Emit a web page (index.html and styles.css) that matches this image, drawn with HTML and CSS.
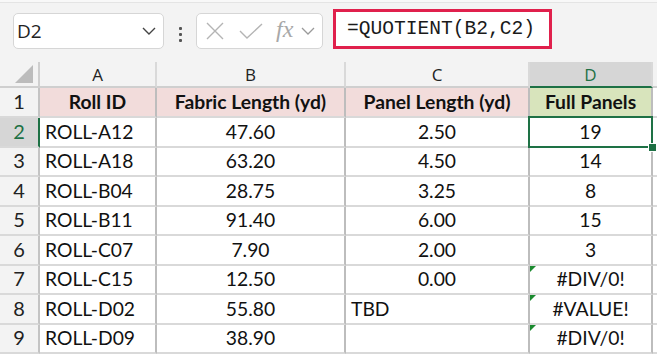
FILE: index.html
```html
<html>
<head>
    <link rel="stylesheet" href="styles.css">
</head>
<body>
<div class="ribbon-edge"></div>
<div class="toolbar">
    <div class="namebox">
        <span>D2</span>
        <svg class="chev" width="14" height="8" viewBox="0 0 14 8"><path d="M1 1 L7 7 L13 1" fill="none" stroke="#444" stroke-width="1.4"/></svg>
    </div>
    <div class="grip"><i></i><i></i><i></i></div>
    <div class="fxbox">
        <svg width="18" height="18" viewBox="0 0 18 18"><path d="M1 1 L17 17 M17 1 L1 17" stroke="#b4b4b4" stroke-width="1.4"/></svg>
        <svg width="24" height="16" viewBox="0 0 24 16"><path d="M1 8 L8 15 L23 1" fill="none" stroke="#b4b4b4" stroke-width="1.4"/></svg>
        <span class="fx">fx</span>
        <svg width="14" height="8" viewBox="0 0 14 8"><path d="M1 1 L7 7 L13 1" fill="none" stroke="#9a9a9a" stroke-width="1.3"/></svg>
    </div>
    <div class="formula">=QUOTIENT(B2,C2)</div>
</div>

<div class="sheet">
    <div class="corner"><span class="tri"></span></div>
    <div class="colhead">A</div>
    <div class="colhead">B</div>
    <div class="colhead">C</div>
    <div class="colhead active">D</div>
    <div class="colhead filler"></div>

    <div class="rowhead">1</div>
    <div class="cell hdr pink">Roll ID</div>
    <div class="cell hdr pink">Fabric Length (yd)</div>
    <div class="cell hdr pink">Panel Length (yd)</div>
    <div class="cell hdr green">Full Panels</div>
    <div class="cell filler"></div>

    <div class="rowhead active">2</div>
    <div class="cell left">ROLL-A12</div>
    <div class="cell">47.60</div>
    <div class="cell">2.50</div>
    <div class="cell selected">19<span class="handle"></span></div>
    <div class="cell filler"></div>

    <div class="rowhead">3</div>
    <div class="cell left">ROLL-A18</div>
    <div class="cell">63.20</div>
    <div class="cell">4.50</div>
    <div class="cell">14</div>
    <div class="cell filler"></div>

    <div class="rowhead">4</div>
    <div class="cell left">ROLL-B04</div>
    <div class="cell">28.75</div>
    <div class="cell">3.25</div>
    <div class="cell">8</div>
    <div class="cell filler"></div>

    <div class="rowhead">5</div>
    <div class="cell left">ROLL-B11</div>
    <div class="cell">91.40</div>
    <div class="cell">6.00</div>
    <div class="cell">15</div>
    <div class="cell filler"></div>

    <div class="rowhead">6</div>
    <div class="cell left">ROLL-C07</div>
    <div class="cell">7.90</div>
    <div class="cell">2.00</div>
    <div class="cell">3</div>
    <div class="cell filler"></div>

    <div class="rowhead">7</div>
    <div class="cell left">ROLL-C15</div>
    <div class="cell">12.50</div>
    <div class="cell">0.00</div>
    <div class="cell err">#DIV/0!</div>
    <div class="cell filler"></div>

    <div class="rowhead">8</div>
    <div class="cell left">ROLL-D02</div>
    <div class="cell">55.80</div>
    <div class="cell left">TBD</div>
    <div class="cell err">#VALUE!</div>
    <div class="cell filler"></div>

    <div class="rowhead">9</div>
    <div class="cell left">ROLL-D09</div>
    <div class="cell">38.90</div>
    <div class="cell"></div>
    <div class="cell err">#DIV/0!</div>
    <div class="cell filler"></div>
</div>
</body>
</html>
```

FILE: styles.css
```css
html, body {
    margin: 0;
    height: 100%;
    overflow: hidden;
    background: #f3f3f3;
    font-family: "Open Sans", sans-serif;
}

.ribbon-edge {
    height: 2px;
    background: #f8f8f8;
    border-bottom: 1px solid #e4e4e4;
}

.toolbar {
    height: 59px;
    display: flex;
    align-items: flex-start;
    padding-left: 13px;
    box-sizing: border-box;
}

.namebox {
    margin-top: 10px;
    width: 151px;
    height: 36px;
    box-sizing: border-box;
    background: #fff;
    border: 1px solid #d6d6d6;
    border-radius: 5px;
    display: flex;
    align-items: center;
    justify-content: space-between;
    padding: 0 7px 0 3px;
    font-size: 19px;
    color: #222;
}

.grip {
    width: 32px;
    margin-top: 24px;
    display: flex;
    flex-direction: column;
    align-items: center;
    gap: 3px;
}

.grip i {
    width: 3px;
    height: 3px;
    background: #555;
    border-radius: 1px;
}

.fxbox {
    margin-top: 10px;
    width: 127px;
    height: 36px;
    box-sizing: border-box;
    background: #fff;
    border: 1px solid #d6d6d6;
    border-radius: 5px;
    display: flex;
    align-items: center;
    padding-left: 9px;
}

.fxbox svg:nth-child(1) { margin-right: 15px; }
.fxbox svg:nth-child(2) { margin-right: 13px; }

.fx {
    font-family: "Liberation Serif", serif;
    font-style: italic;
    font-size: 24px;
    color: #a8a8a8;
    margin-right: 8px;
    margin-top: -3px;
}

.formula {
    margin-top: 6px;
    margin-left: 10px;
    width: 219px;
    height: 40px;
    box-sizing: border-box;
    background: #fff;
    border: 3px solid #e0204c;
    font-family: "Liberation Mono", monospace;
    font-size: 19.6px;
    color: #1a1a1a;
    padding-left: 11px;
    line-height: 34px;
}

.sheet {
    display: grid;
    grid-template-columns: 40px 117px 189px 184px 123px 1fr;
    grid-template-rows: 26px 30px repeat(8, 29.5px) 10px;
    background: #fff;
    font-family: "Lato", sans-serif;
    font-size: 19.3px;
    color: #111;
}

.corner {
    background: #f3f3f3;
    border-right: 2px solid #cfcfcf;
    border-bottom: 2px solid #cfcfcf;
    position: relative;
}

.tri {
    position: absolute;
    right: 5px;
    bottom: 3px;
    width: 0;
    height: 0;
    border-left: 18px solid transparent;
    border-bottom: 18px solid #bcbcbc;
}

.colhead {
    background: #f3f3f3;
    border-right: 2px solid #d9d9d9;
    border-bottom: 2px solid #cfcfcf;
    display: flex;
    align-items: center;
    justify-content: center;
    font-family: "Open Sans", sans-serif;
    font-size: 17px;
    color: #222;
}

.colhead.active {
    background: #d6d6d6;
    color: #1e7145;
    border-bottom: 2px solid #1e7145;
}

.colhead.filler {
    border-right: none;
}

.rowhead {
    background: #f3f3f3;
    border-right: 2px solid #c4c4c4;
    border-bottom: 2px solid #d9d9d9;
    display: flex;
    align-items: flex-end;
    justify-content: center;
    padding-bottom: 3px;
    box-sizing: border-box;
    color: #222;
    font-size: 20px;
}

.rowhead.active {
    background: #d6d6d6;
    color: #1e7145;
    border-right: 2px solid #1e7145;
}

.cell {
    border-right: 2px solid #bdbdbd;
    border-bottom: 2px solid #d9d9d9;
    display: flex;
    align-items: flex-end;
    justify-content: center;
    padding: 0 5px 3px 5px;
    box-sizing: border-box;
    white-space: nowrap;
    position: relative;
}

.cell.left {
    justify-content: flex-start;
}

.cell.hdr {
    font-weight: bold;
}

.pink {
    background: #f2dcdb;
}

.green {
    background: #d8e4bc;
}

.cell.filler {
    border-right: none;
    background: #fff;
}

.selected::after {
    content: "";
    position: absolute;
    left: -2px;
    top: -2px;
    right: -2px;
    bottom: -2px;
    border: 2px solid #1e7145;
}

.handle {
    position: absolute;
    right: -6px;
    bottom: -6px;
    width: 7px;
    height: 7px;
    background: #1e7145;
    border: 1px solid #fff;
    z-index: 2;
}

.err::before {
    content: "";
    position: absolute;
    left: 0;
    top: 0;
    border-top: 6px solid #1a8a2e;
    border-right: 6px solid transparent;
}
```
